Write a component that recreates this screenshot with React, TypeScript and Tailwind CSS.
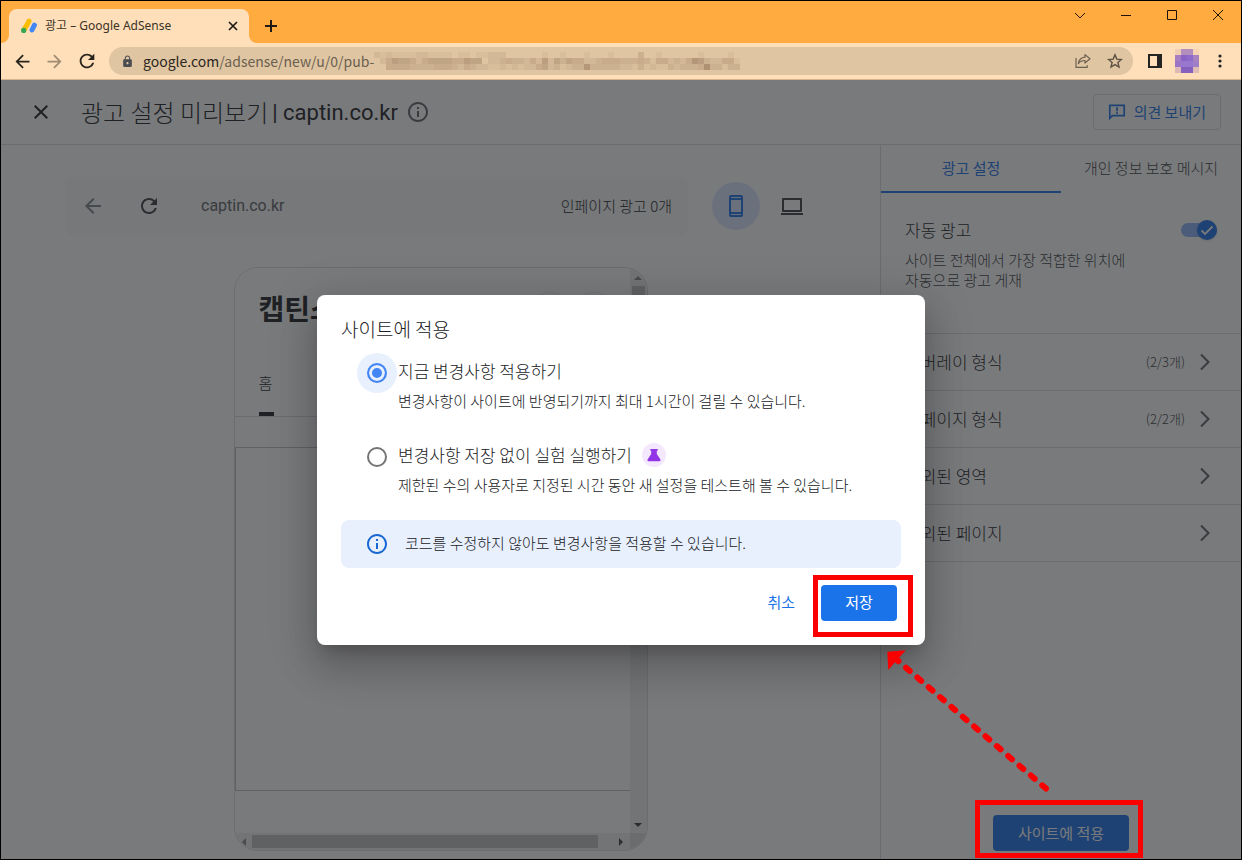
import type { ReactNode } from 'react';
import { MdArrowBack, MdArrowForward, MdClose, MdInfoOutline, MdLock, MdRefresh } from 'react-icons/md';

const urlMosaic = [
  '2121111221111011011222000000100100010001000030010000001000010',
  '0246554245555446550223433242625354422344433343144232476322441',
  '0044443333444324322112121224523123373333322131211323334833133',
];

const avatarMosaic = [
  ['#efcdb2', '#b48fbd', '#b48fbd', '#f5d3b4'],
  ['#a67dc0', '#8a63c4', '#8f6ac9', '#a983c0'],
  ['#9b76c6', '#9877cf', '#9877cf', '#a17fc7'],
  ['#dcb8b6', '#8560bd', '#8560bd', '#e0bcb6'],
];

const sections = [
  { name: '오버레이 형식', count: '(2/3개)' },
  { name: '인페이지 형식', count: '(2/2개)' },
  { name: '제외된 영역', count: '' },
  { name: '제외된 페이지', count: '' },
];

function TabStrip() {
  return (
    <div className="flex h-[42px] items-end justify-between bg-[#ffab40]">
      <div className="flex items-end pl-2">
        <div className="relative flex h-[34px] w-60 items-center rounded-t-lg bg-[#ffdfb9] pr-2.5 pl-3 text-[#3b3226]">
          <svg className="absolute bottom-0 -left-2 h-2 w-2" viewBox="0 0 8 8" aria-hidden="true">
            <path d="M8 0v8H0a8 8 0 0 0 8-8z" fill="#ffdfb9" />
          </svg>
          <svg className="absolute -right-2 bottom-0 h-2 w-2" viewBox="0 0 8 8" aria-hidden="true">
            <path d="M0 0v8h8a8 8 0 0 1-8-8z" fill="#ffdfb9" />
          </svg>
          <svg className="h-4 w-4 shrink-0" viewBox="0 0 16 16" aria-hidden="true">
            <path d="M8 3.2 3 12" stroke="#fbbc04" strokeWidth="5" strokeLinecap="round" />
            <path d="M13.4 7.2 11 12" stroke="#4285f4" strokeWidth="5" strokeLinecap="round" />
            <circle cx="2.7" cy="12.4" r="2.6" fill="#34a853" />
          </svg>
          <span className="ml-2 flex-1 truncate font-['Noto_Sans','Noto_Sans_CJK_KR',sans-serif] text-xs">
            광고 – Google AdSense
          </span>
          <button type="button" aria-label="탭 닫기" className="flex h-3 w-3 items-center justify-center">
            <svg className="h-3 w-3" viewBox="0 0 12 12" stroke="#1f1a14" strokeWidth="1.7" aria-hidden="true">
              <path d="m2 2 8 8M10 2l-8 8" />
            </svg>
          </button>
        </div>
        <button type="button" aria-label="새 탭" className="ml-[15px] flex h-[34px] w-3.5 items-center justify-center">
          <svg className="h-3.5 w-3.5" viewBox="0 0 14 14" stroke="#1f1a14" strokeWidth="2" aria-hidden="true">
            <path d="M7 1v12M1 7h12" />
          </svg>
        </button>
      </div>
      <div className="flex self-start">
        <WindowButton label="탭 검색"><path d="m1 4 5 5 5-5" /></WindowButton>
        <WindowButton label="최소화"><path d="M1 6.5h10" /></WindowButton>
        <WindowButton label="최대화"><path d="M1.5 1.5h9v9h-9z" /></WindowButton>
        <WindowButton label="닫기"><path d="m1 1 10 10M11 1 1 11" /></WindowButton>
      </div>
    </div>
  );
}

function WindowButton({ label, children }: { label: string; children: ReactNode }) {
  return (
    <button type="button" aria-label={label} className="flex h-7 w-[46px] items-center justify-center">
      <svg className="h-3 w-3" viewBox="0 0 12 12" fill="none" stroke="#1c1309" aria-hidden="true">
        {children}
      </svg>
    </button>
  );
}

function AddressBar() {
  return (
    <div className="flex h-[37px] items-center border-b border-[#d5b48c] bg-[#ffdfb9] pr-[13px] pl-[11px] text-[#28231c]">
      <div className="flex gap-[11px]">
        <button type="button" aria-label="뒤로"><MdArrowBack size={21} /></button>
        <button type="button" aria-label="앞으로" className="text-[#a08b73]"><MdArrowForward size={21} /></button>
        <button type="button" aria-label="새로고침"><MdRefresh size={22} /></button>
      </div>
      <div className="ml-[11px] flex h-7 flex-1 items-center rounded-full bg-[#dfc5a2] pr-2.5 pl-3">
        <MdLock size={13} className="shrink-0 text-[#4c4d50]" />
        <span className="ml-[9px] font-['Noto_Sans_CJK_KR',sans-serif] text-sm whitespace-nowrap text-[#6b5f50]">
          <span className="text-[#2b2620]">google.com</span>/adsense/new/u/0/pub-
        </span>
        <svg className="h-[18px] w-[366px] shrink-0" viewBox="0 0 61 3" shapeRendering="crispEdges" aria-hidden="true">
          {urlMosaic.map((row, y) =>
            row.split('').map((level, x) => (
              <rect key={`${x}-${y}`} x={x} y={y} width="1" height="1" fill="#87694f" opacity={Number(level) * 0.07} />
            )),
          )}
        </svg>
        <div className="flex-1" />
        <button type="button" aria-label="공유">
          <svg className="h-4 w-4" viewBox="0 0 16 16" fill="none" stroke="#6c604f" strokeWidth="1.2" strokeLinejoin="round" aria-hidden="true">
            <path d="M1 5v9.4h11.2v-2.2" />
            <path d="M10 4.2V1.6l5 4.2-5 4.2V7.5C7.2 7.5 5 8.3 3.4 10.6 3.9 7 6.2 4.6 10 4.2z" />
          </svg>
        </button>
        <button type="button" aria-label="북마크" className="ml-4">
          <svg className="h-4 w-4" viewBox="0 0 16 16" fill="none" stroke="#5d5243" strokeWidth="1.4" aria-hidden="true">
            <path d="m8 1.8 1.8 4.3 4.6.4-3.500 3 1.100 4.500L8 11.600 4 14l1.100-4.500-3.500-3 4.600-.4z" />
          </svg>
        </button>
      </div>
      <button type="button" aria-label="측면 패널" className="ml-[15px]">
        <svg className="h-3.5 w-3.5" viewBox="0 0 14 14" aria-hidden="true">
          <path d="M0 0h14v14H0zM2 2v10h7V2z" fill="#242424" fillRule="evenodd" />
        </svg>
      </button>
      <button type="button" aria-label="프로필" className="ml-[13px]">
        <svg className="h-6 w-6" viewBox="0 0 4 4" shapeRendering="crispEdges" aria-hidden="true">
          {avatarMosaic.map((row, y) =>
            row.map((color, x) => <rect key={`${x}-${y}`} x={x} y={y} width="1" height="1" fill={color} />),
          )}
        </svg>
      </button>
      <button type="button" aria-label="메뉴" className="ml-[13px]">
        <svg className="h-4 w-4" viewBox="0 0 16 16" fill="#242424" aria-hidden="true">
          <circle cx="8" cy="3" r="1.6" />
          <circle cx="8" cy="8" r="1.6" />
          <circle cx="8" cy="13" r="1.6" />
        </svg>
      </button>
    </div>
  );
}

function PageHeader() {
  return (
    <header className="flex h-[65px] items-center border-b border-[#dadce0] pr-5 pl-7 text-[#202124]">
      <button type="button" aria-label="닫기"><MdClose size={24} /></button>
      <h1 className="ml-7 flex items-center">
        <span className="text-2xl">광고 설정 미리보기</span>
        <span className="ml-1 font-['Roboto',sans-serif] text-[22px] font-normal">| captin.co.kr</span>
      </h1>
      <MdInfoOutline size={24} className="ml-2 text-[#5f6368]" />
      <button
        type="button"
        className="ml-auto flex h-9 items-center gap-2 rounded border border-[#dadce0] px-3.5 text-[15px] font-normal text-[#1a73e8]"
      >
        <svg className="h-[18px] w-[18px]" viewBox="0 0 18 18" aria-hidden="true">
          <path d="M1.8 2.3h14.4v10.4H4.4l-2.6 2.6z" fill="none" stroke="#1a73e8" strokeWidth="1.7" />
          <path d="M8.2 4.3h1.7v3.9H8.2zM8.2 9.3h1.7V11H8.2z" fill="#1a73e8" />
        </svg>
        의견 보내기
      </button>
    </header>
  );
}

function Preview() {
  return (
    <section className="flex min-w-0 flex-1 flex-col items-center pt-8 pb-2">
      <div className="flex items-center">
        <div className="flex h-[58px] w-[623px] items-center rounded-lg bg-[#f8f9fa] px-4 text-[#3c4043]">
          <button type="button" aria-label="이전 페이지" className="text-[#80868b]"><MdArrowBack size={24} /></button>
          <button type="button" aria-label="새로고침" className="ml-8"><MdRefresh size={24} /></button>
          <span className="ml-10 font-['Roboto',sans-serif] text-base font-normal text-[#5f6368]">captin.co.kr</span>
          <span className="ml-auto text-[15px] text-[#202124]">인페이지 광고 0개</span>
        </div>
        <button type="button" aria-label="휴대전화" className="ml-6 flex h-12 w-12 items-center justify-center rounded-full bg-[#dbe8fe]">
          <svg className="h-6 w-6" viewBox="0 0 24 24" aria-hidden="true">
            <path
              d="M7 1h10a2 2 0 0 1 2 2v18a2 2 0 0 1-2 2H7a2 2 0 0 1-2-2V3a2 2 0 0 1 2-2zM7 6v12h10V6zM7 3v1h10V3zM7 20v1h10v-1z"
              fill="#1a73e8"
              fillRule="evenodd"
            />
          </svg>
        </button>
        <button type="button" aria-label="컴퓨터" className="ml-2 flex h-12 w-12 items-center justify-center rounded-full">
          <svg className="h-6 w-6" viewBox="0 0 24 24" aria-hidden="true">
            <path d="M3 5h18v12H3z" fill="none" stroke="#3c4043" strokeWidth="2" strokeLinejoin="round" />
            <path d="M1 19h22v2H1z" fill="#3c4043" />
          </svg>
        </button>
      </div>
      <div className="mt-8 grid w-[414px] flex-1 grid-cols-[1fr_17px] grid-rows-[1fr_17px] overflow-hidden rounded-3xl border border-[#dadce0]">
        <div className="flex flex-col bg-white">
          <div className="flex items-start justify-between pt-5 pr-4 pl-6">
            <span className="text-[28px] leading-10 font-bold text-[#202124]">캡틴스</span>
            <span className="mt-1 flex gap-1">
              <span className="h-10 w-10 rounded-full border border-[#e8eaed]" />
              <span className="h-10 w-10 rounded-full border border-[#e8eaed]" />
            </span>
          </div>
          <nav className="mt-[39px] border-b border-[#dadce0] pl-6">
            <a href="#home" className="flex w-[15px] flex-col text-[15px] leading-6 text-[#202124]">
              <span>홈</span>
              <span className="mt-[17px] h-1 bg-[#202124]" />
            </a>
          </nav>
          <div className="mt-[30px] mb-[42px] flex-1 border border-r-0 border-[#bdc1c6]" />
        </div>
        <div className="flex flex-col items-center justify-between bg-[#f1f1f1] pt-1.5 pb-1">
          <div className="flex flex-col items-center gap-1">
            <svg className="h-2 w-2" viewBox="0 0 8 8" aria-hidden="true"><path d="m0 6 4-4 4 4z" fill="#8a8a8a" /></svg>
            <div className="h-[200px] w-[13px] bg-[#c1c1c1]" />
          </div>
          <svg className="h-2 w-2" viewBox="0 0 8 8" aria-hidden="true"><path d="m0 2 4 4 4-4z" fill="#404040" /></svg>
        </div>
        <div className="flex items-center bg-[#f1f1f1] pr-1 pl-1.5">
          <svg className="h-2 w-2" viewBox="0 0 8 8" aria-hidden="true"><path d="M5 0 1 4l4 4z" fill="#8a8a8a" /></svg>
          <div className="mr-5 ml-[3px] h-[13px] flex-1 bg-[#c1c1c1]" />
          <svg className="h-2 w-2" viewBox="0 0 8 8" aria-hidden="true"><path d="m1 0 4 4-4 4z" fill="#404040" /></svg>
        </div>
        <div className="bg-[#dcdcdc]" />
      </div>
    </section>
  );
}

function Settings() {
  return (
    <aside className="flex w-[361px] shrink-0 flex-col border-l border-[#dadce0]">
      <div role="tablist" className="grid h-12 grid-cols-2 text-[15px]">
        <button type="button" role="tab" aria-selected="true" className="border-b-2 border-[#1a73e8] font-normal text-[#1a73e8]">
          광고 설정
        </button>
        <button type="button" role="tab" aria-selected="false" className="border-b-2 border-transparent text-[#3c4043]">
          개인 정보 보호 메시지
        </button>
      </div>
      <div className="h-[141px] border-b border-[#dadce0] px-6 pt-[25px]">
        <div className="flex items-center justify-between">
          <span id="auto-ads" className="text-[17px] leading-6 text-[#202124]">자동 광고</span>
          <button
            type="button"
            role="switch"
            aria-checked="true"
            aria-labelledby="auto-ads"
            className="flex h-3.5 w-9 items-center justify-end rounded-full bg-[#8ab4f8]"
          >
            <span className="flex h-5 w-5 shrink-0 items-center justify-center rounded-full bg-[#1a73e8] shadow">
              <svg className="h-3.5 w-3.5" viewBox="0 0 14 14" fill="none" stroke="#fff" strokeWidth="1.8" aria-hidden="true">
                <path d="m1.500 7.500 3.500 3.500 7.500-7.500" />
              </svg>
            </span>
          </button>
        </div>
        <p className="mt-2 w-[230px] text-[15px] leading-5 text-[#3c4043]">사이트 전체에서 가장 적합한 위치에 자동으로 광고 게재</p>
      </div>
      {sections.map((section) => (
        <button
          type="button"
          key={section.name}
          className="flex h-[57px] items-center border-b border-[#dadce0] px-6 text-[17px] text-[#202124]"
        >
          {section.name}
          <span className="ml-auto text-[13px] text-[#3c4043]">{section.count}</span>
          <svg className="ml-2 h-6 w-6" viewBox="0 0 24 24" fill="none" stroke="#5f6368" strokeWidth="2" aria-hidden="true">
            <path d="m8 4.500 7.500 7.500L8 19.500" />
          </svg>
        </button>
      ))}
      <div className="mt-auto flex justify-center pb-2">
        <button type="button" className="h-9 min-w-[136px] rounded bg-[#1a73e8] px-6 text-[15px] font-normal text-white">
          사이트에 적용
        </button>
      </div>
    </aside>
  );
}

function Option({ id, label, text, checked, badge }: { id: string; label: string; text: string; checked?: boolean; badge?: ReactNode }) {
  return (
    <div className="flex items-start pl-4">
      <span className={checked ? 'flex h-10 w-10 items-center justify-center rounded-full bg-[#e8f0fe]' : 'flex h-10 w-10 items-center justify-center rounded-full'}>
        <input
          type="radio"
          id={id}
          name="apply-mode"
          defaultChecked={checked}
          className="h-5 w-5 appearance-none rounded-full border-2 border-[#757575] checked:border-[#4285f4] checked:bg-[#4285f4] checked:shadow-[inset_0_0_0_3px_#e8f0fe]"
        />
      </span>
      <div className="pt-1.5 pl-px">
        <div className="flex h-6 items-center gap-2.5">
          <label htmlFor={id} className="text-[17px] leading-6 text-[#202124]">{label}</label>
          {badge}
        </div>
        <p className="mt-2 text-[15px] leading-5 whitespace-nowrap text-[#202124]">{text}</p>
      </div>
    </div>
  );
}

function ApplyDialog() {
  return (
    <div
      role="dialog"
      aria-modal="true"
      aria-labelledby="apply-title"
      className="w-[608px] rounded-lg bg-white px-6 pt-6 pb-6 shadow-[0_11px_15px_-7px_rgba(0,0,0,0.2),0_24px_38px_3px_rgba(0,0,0,0.14),0_9px_46px_8px_rgba(0,0,0,0.12)]"
    >
      <h2 id="apply-title" className="text-[19px] leading-5 text-[#202124]">사이트에 적용</h2>
      <form className="mt-3.5" onSubmit={(event) => event.preventDefault()}>
        <Option id="apply-now" label="지금 변경사항 적용하기" text="변경사항이 사이트에 반영되기까지 최대 1시간이 걸릴 수 있습니다." checked />
        <div className="mt-[26px]">
          <Option
            id="run-experiment"
            label="변경사항 저장 없이 실험 실행하기"
            text="제한된 수의 사용자로 지정된 시간 동안 새 설정을 테스트해 볼 수 있습니다."
            badge={
              <span className="flex h-6 w-6 items-center justify-center rounded-full bg-[#f3e8fd]">
                <svg className="h-3.5 w-3.5" viewBox="0 0 14 14" fill="#9334e6" aria-hidden="true">
                  <path d="M3.300 1h7.400v1.200l-.9.800v3l3.600 5.500c.4.800 0 1.700-.9 1.700h-11c-.9 0-1.300-.9-.9-1.700L4.200 6V3l-.9-.8z" />
                </svg>
              </span>
            }
          />
        </div>
        <div className="mt-[25px] flex h-12 items-center rounded-lg bg-[#e8f0fe] pl-6 text-[15px] text-[#202124]">
          <MdInfoOutline size={24} className="text-[#1967d2]" />
          <span className="ml-4">코드를 수정하지 않아도 변경사항을 적용할 수 있습니다.</span>
        </div>
        <div className="mt-[17px] flex items-center justify-end gap-[18px] pr-1">
          <button type="button" className="h-9 px-2 text-[15px] font-normal text-[#1a73e8]">취소</button>
          <span className="relative">
            <button type="submit" className="block h-9 min-w-[76px] rounded bg-[#1a73e8] px-6 text-[15px] font-normal text-white">저장</button>
            <span className="pointer-events-none absolute -top-2.5 -right-4 -bottom-4 -left-2 border-5 border-[#fa0000]" />
          </span>
        </div>
      </form>
    </div>
  );
}

export default function App() {
  return (
    <div className="flex min-h-screen flex-col border border-black bg-white font-['Noto_Sans_CJK_KR',sans-serif]">
      <TabStrip />
      <AddressBar />
      <div className="relative flex flex-1 flex-col font-light">
        <PageHeader />
        <main className="flex flex-1">
          <Preview />
          <Settings />
        </main>
        <div className="absolute inset-0 flex items-center justify-center bg-[#202124]/60">
          <ApplyDialog />
        </div>
        <svg className="pointer-events-none absolute right-[190px] bottom-16 h-[150px] w-[170px]" viewBox="0 0 170 150" aria-hidden="true">
          <path d="M165 143.600 15 14" stroke="#fa0000" strokeWidth="6" strokeLinecap="round" strokeDasharray="5 10" />
          <path d="m6.300 6.700 18.400-1.400L7.300 25z" fill="#fa0000" />
        </svg>
        <div className="pointer-events-none absolute right-[98px] bottom-px h-[58px] w-[168px] border-5 border-[#fa0000]" />
      </div>
    </div>
  );
}
